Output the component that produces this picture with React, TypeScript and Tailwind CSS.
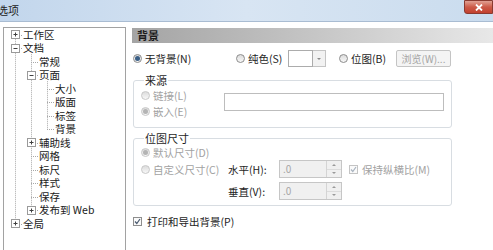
const font = "font-['Noto_Sans_CJK_SC','Microsoft_YaHei',sans-serif]";

type Node = { label: string; level: number; box?: "plus" | "minus" };

const tree: Node[] = [
  { label: "工作区", level: 0, box: "plus" },
  { label: "文档", level: 0, box: "minus" },
  { label: "常规", level: 1 },
  { label: "页面", level: 1, box: "minus" },
  { label: "大小", level: 2 },
  { label: "版面", level: 2 },
  { label: "标签", level: 2 },
  { label: "背景", level: 2 },
  { label: "辅助线", level: 1, box: "plus" },
  { label: "网格", level: 1 },
  { label: "标尺", level: 1 },
  { label: "样式", level: 1 },
  { label: "保存", level: 1 },
  { label: "发布到 Web", level: 1, box: "plus" },
  { label: "全局", level: 0, box: "plus" },
];

const indent = ["pl-[7px]", "pl-[23px]", "pl-[39px]"];

const ROW = 13.5;
const cx = (l: number) => 11 + 16 * l;
const cy = (i: number) => ROW * i + ROW / 2;

function ExpandBox({ kind }: { kind: "plus" | "minus" }) {
  return (
    <svg width="9" height="9" viewBox="0 0 9 9" className="shrink-0">
      <rect x="0.5" y="0.5" width="8" height="8" fill="#fff" stroke="#9a9a9a" />
      <path d="M2.5 4.5h4" stroke="#404040" />
      {kind === "plus" && <path d="M4.5 2.5v4" stroke="#404040" />}
    </svg>
  );
}

function TreeLines() {
  const lines: JSX.Element[] = [];
  const v = (x: number, a: number, b: number, k: string) =>
    lines.push(<line key={k} x1={x + 0.5} y1={cy(a)} x2={x + 0.5} y2={cy(b)} />);
  v(cx(0), 0, 14, "v0");
  v(cx(1), 1, 13, "v1");
  v(cx(2), 3, 7, "v2");
  tree.forEach((n, i) =>
    lines.push(
      <line key={"h" + i} x1={cx(n.level)} y1={Math.round(cy(i)) + 0.5} x2={cx(n.level) + 8} y2={Math.round(cy(i)) + 0.5} />
    )
  );
  return (
    <svg className="absolute inset-0 w-full h-full" stroke="#a8a8a8" strokeDasharray="1 1">
      {lines}
    </svg>
  );
}

function Radio({ checked, disabled }: { checked?: boolean; disabled?: boolean }) {
  return (
    <span
      className={`shrink-0 w-[9px] h-[9px] rounded-full border flex items-center justify-center bg-gradient-to-b from-[#dcdcdc] to-[#f8f8f8] ${
        disabled ? "border-[#c8c8c8]" : "border-[#8c8c8c]"
      }`}
    >
      {checked && (
        <span className={`w-[5px] h-[5px] rounded-full ${disabled ? "bg-[#b4b4b4]" : "bg-[#3b5f86]"}`} />
      )}
    </span>
  );
}

function Check({ disabled }: { disabled?: boolean }) {
  return (
    <svg width="9" height="9" viewBox="0 0 9 9" className="shrink-0">
      <rect x="0.5" y="0.5" width="8" height="8" fill="#fafafa" stroke={disabled ? "#c4c4c4" : "#8e8e8e"} />
      <path d="M2 4.5l1.8 2L7 2" fill="none" stroke={disabled ? "#a9b4c0" : "#4a5a70"} strokeWidth="1.2" />
    </svg>
  );
}

function Spinner() {
  return (
    <div className="w-[63px] h-[18px] flex border border-[#c6c6c6] bg-[#f0f0f0]">
      <div className="flex-1 pl-[3px] text-[10px] leading-[16px] text-[#a6a6a6]">.0</div>
      <div className="w-[15px] flex flex-col border-l border-[#d4d4d4]">
        <div className="flex-1 flex items-center justify-center border-b border-[#dcdcdc]">
          <span className="w-0 h-0 border-x-[2px] border-x-transparent border-b-[2px] border-b-[#9a9a9a]" />
        </div>
        <div className="flex-1 flex items-center justify-center">
          <span className="w-0 h-0 border-x-[2px] border-x-transparent border-t-[2px] border-t-[#9a9a9a]" />
        </div>
      </div>
    </div>
  );
}

export default function App() {
  return (
    <div className={`w-[493px] h-[250px] overflow-hidden bg-white text-[10.5px] leading-[13px] text-[#1e1e1e] ${font}`}>
      {/* title bar */}
      <div className="h-[22px] flex justify-between items-start bg-gradient-to-r from-[#c2d6ec] via-[#d8e5f3] to-[#cadcee] border-b border-[#a9bcd2]">
        <span className="ml-[-3px] mt-[3px] text-[11px] leading-[14px] text-[#222]">选项</span>
        <div className="w-[29px] h-[14px] flex items-center justify-center rounded-bl-[3px] border border-[#8a3a30] bg-gradient-to-b from-[#e0a093] via-[#cc5a48] to-[#c2402e]">
          <svg width="8" height="7" viewBox="0 0 8 7">
            <path d="M1 0.5l6 6M7 0.5l-6 6" stroke="#fff" strokeWidth="1.8" />
          </svg>
        </div>
      </div>

      <div className="flex">
        {/* tree */}
        <div className="mt-[5px] ml-[3px] w-[123px] h-[240px] border border-[#a2a2a2] bg-white relative">
          <TreeLines />
          <div className="relative flex flex-col">
            {tree.map((n, i) => (
              <div key={i} className={`h-[13.5px] flex items-center ${indent[n.level]}`}>
                {n.box ? <ExpandBox kind={n.box} /> : <span className="w-[9px] shrink-0" />}
                <span className="ml-[3px] text-[10.5px] leading-[12px] bg-white text-[#1a1a1a]">{n.label}</span>
              </div>
            ))}
          </div>
        </div>

        {/* right panel */}
        <div className="ml-[6px] flex-1 flex flex-col">
          <div className="mt-[6px] h-[15px] pl-[5px] font-bold text-[11px] leading-[15px] text-[#1c1c1c] bg-gradient-to-r from-[#a4a4a4] to-[#e8e8e8]">
            背景
          </div>

          <div className="mt-[7px] h-[17px] flex items-center">
            <div className="w-[104px] pl-[1px] flex items-center">
              <Radio checked />
              <span className="ml-[3px]">无背景(N)</span>
            </div>
            <div className="w-[52px] flex items-center">
              <Radio />
              <span className="ml-[3px]">纯色(S)</span>
            </div>
            <div className="w-[25px] h-[17px] border border-[#acacac] bg-white" />
            <div className="w-[13px] h-[17px] border border-l-0 border-[#c4c4c4] bg-[#f2f2f2] flex items-center justify-center">
              <span className="w-0 h-0 border-x-[2px] border-x-transparent border-t-[2px] border-t-[#8a8a8a]" />
            </div>
            <div className="ml-[13px] w-[57px] flex items-center">
              <Radio />
              <span className="ml-[3px]">位图(B)</span>
            </div>
            <div className="w-[55px] h-[17px] border border-[#c4c4c4] rounded-[2px] bg-[#f4f4f4] text-[10px] leading-[15px] text-center text-[#a4a4a4]">
              浏览(W)...
            </div>
          </div>

          <fieldset className="mt-[6px] ml-[1px] w-[319px] border border-[#d8dde2] rounded-[3px] px-[7px] pb-[9px]">
            <legend className="ml-[3px] px-[1px] text-[11px] leading-[14px]">来源</legend>
            <div className="flex">
              <div className="w-[83px] flex flex-col text-[#a2a2a2]">
                <div className="mt-[1px] h-[14px] flex items-center">
                  <Radio disabled />
                  <span className="ml-[3px]">链接(L)</span>
                </div>
                <div className="mt-[2px] h-[14px] flex items-center">
                  <Radio checked disabled />
                  <span className="ml-[3px]">嵌入(E)</span>
                </div>
              </div>
              <div className="mt-[6px] w-[220px] h-[18px] border border-[#bdbdbd] bg-white" />
            </div>
          </fieldset>

          <fieldset className="mt-[3px] ml-[1px] w-[319px] border border-[#d8dde2] rounded-[3px] px-[7px] pb-[5px]">
            <legend className="ml-[3px] px-[1px] text-[11px] leading-[14px]">位图尺寸</legend>
            <div className="h-[14px] flex items-center text-[#a2a2a2]">
              <Radio checked disabled />
              <span className="ml-[3px]">默认尺寸(D)</span>
            </div>
            <div className="mt-[1px] h-[18px] flex items-center">
              <div className="w-[87px] flex items-center text-[#a2a2a2]">
                <Radio disabled />
                <span className="ml-[3px]">自定义尺寸(C)</span>
              </div>
              <span className="w-[51px]">水平(H):</span>
              <Spinner />
              <div className="ml-[7px] flex items-center text-[#a2a2a2]">
                <Check disabled />
                <span className="ml-[4px]">保持纵横比(M)</span>
              </div>
            </div>
            <div className="mt-[4px] h-[18px] flex items-center pl-[87px]">
              <span className="w-[51px]">垂直(V):</span>
              <Spinner />
            </div>
          </fieldset>

          <div className="mt-[8px] h-[14px] pl-[1px] flex items-center">
            <Check />
            <span className="ml-[5px]">打印和导出背景(P)</span>
          </div>
        </div>
      </div>
    </div>
  );
}
